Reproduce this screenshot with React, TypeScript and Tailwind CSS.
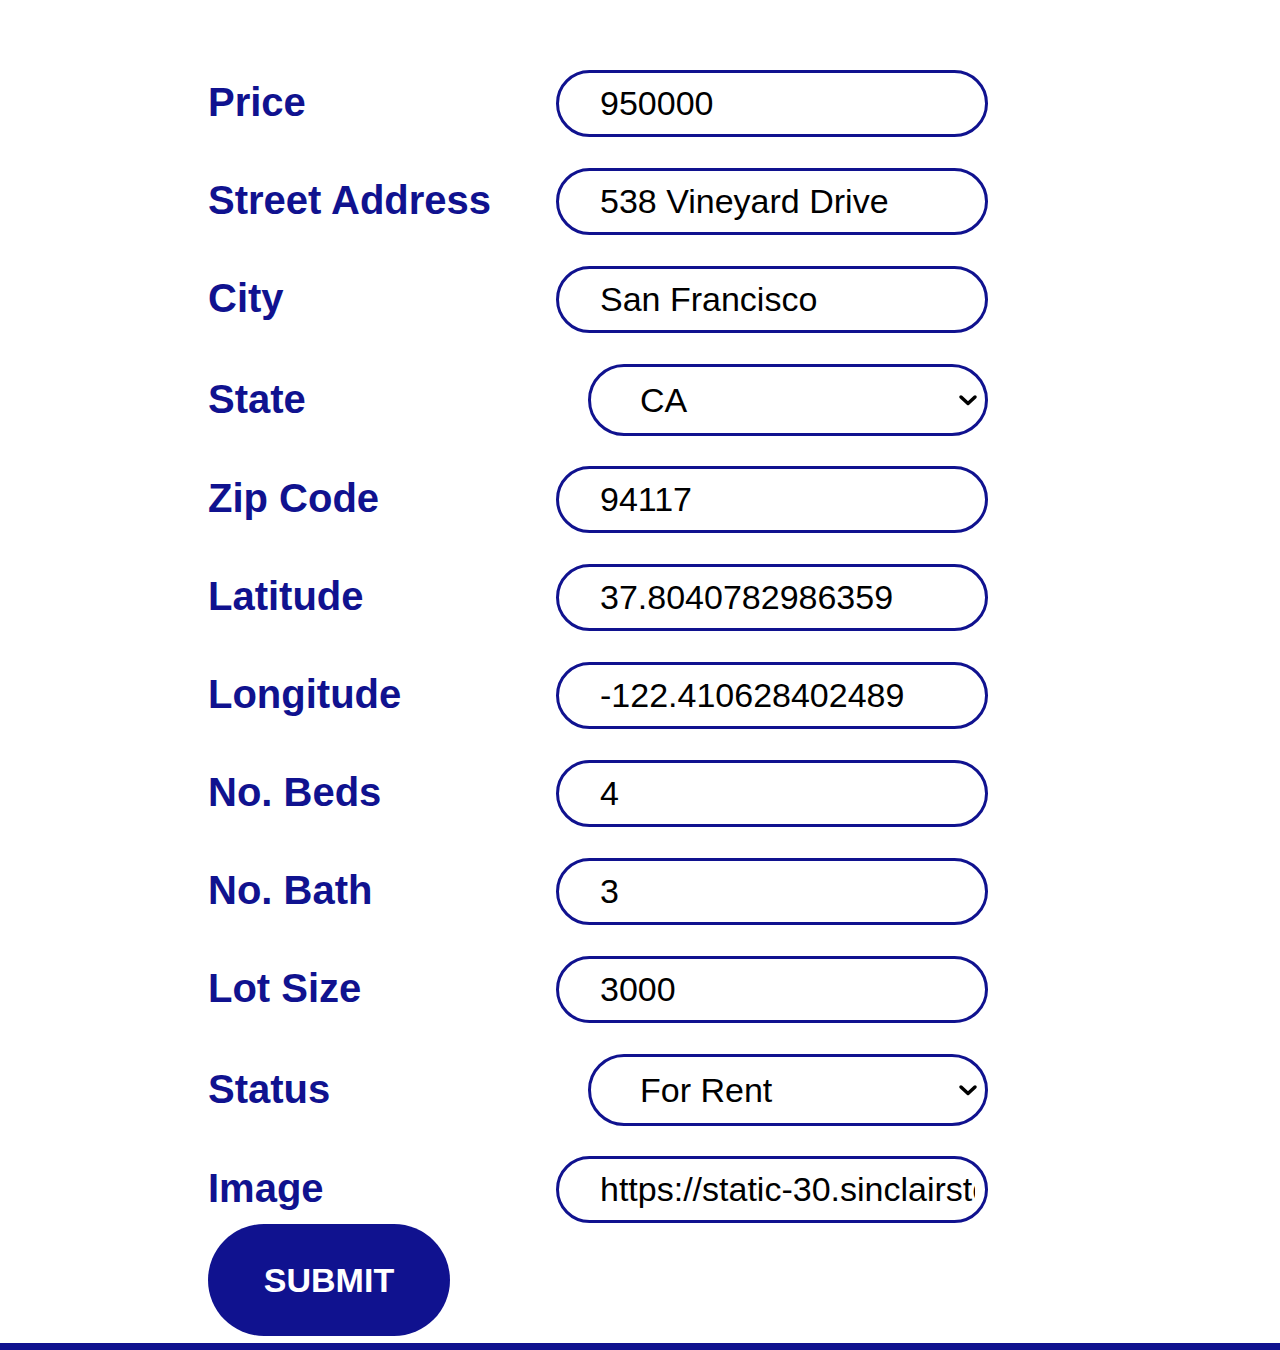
import { useState } from 'react'

const FIELDS = [
  { name: 'price', label: 'Price', value: '950000' },
  { name: 'address', label: 'Street Address', value: '538 Vineyard Drive' },
  { name: 'city', label: 'City', value: 'San Francisco' },
  { name: 'state', label: 'State', value: 'CA', options: ['AL', 'AZ', 'CA', 'CO', 'NY', 'OR', 'TX', 'WA'] },
  { name: 'zip', label: 'Zip Code', value: '94117' },
  { name: 'lat', label: 'Latitude', value: '37.8040782986359' },
  { name: 'lng', label: 'Longitude', value: '-122.410628402489' },
  { name: 'beds', label: 'No. Beds', value: '4' },
  { name: 'bath', label: 'No. Bath', value: '3' },
  { name: 'lot', label: 'Lot Size', value: '3000' },
  { name: 'status', label: 'Status', value: 'For Rent', options: ['For Sale', 'For Rent', 'Sold'] },
  {
    name: 'image',
    label: 'Image',
    value: 'https://static-30.sinclairstoryline.com/resources/media/house-538-vineyard-drive.jpg',
  },
]

function Chevron() {
  return (
    <svg
      className="pointer-events-none absolute right-[10px] top-1/2 -translate-y-1/2"
      width="20"
      height="13"
      viewBox="0 0 20 13"
      fill="none"
    >
      <path d="M3 3.5l7 6.5 7-6.5" stroke="#000" strokeWidth="3.5" strokeLinecap="round" strokeLinejoin="round" />
    </svg>
  )
}

export default function App() {
  const [values, setValues] = useState<Record<string, string>>(
    Object.fromEntries(FIELDS.map((f) => [f.name, f.value]))
  )

  return (
    <div className="min-h-[1350px] bg-white font-['Liberation_Sans',Arial,sans-serif] flex flex-col">
      <form className="flex flex-col pt-[70px] pl-[208px]" onSubmit={(e) => e.preventDefault()}>
        {FIELDS.map((f, i) => {
          const last = i === FIELDS.length - 1
          return (
            <div
              key={f.name}
              className={
                f.options
                  ? 'flex items-center h-[72px] mb-[30px]'
                  : last
                    ? 'flex items-center h-[67px] mb-px'
                    : 'flex items-center h-[67px] mb-[31px]'
              }
            >
              <label
                htmlFor={f.name}
                className="w-[348px] shrink-0 text-[40px] leading-[46px] font-bold text-[#10128f] -mt-[3px]"
              >
                {f.label}
              </label>
              {f.options ? (
                <div className="relative ml-[32px] w-[400px] h-[72px]">
                  <select
                    id={f.name}
                    value={values[f.name]}
                    onChange={(e) => setValues({ ...values, [f.name]: e.target.value })}
                    className="appearance-none w-full h-full rounded-full border-[3px] border-[#10128f] bg-white pl-[49px] pr-[40px] text-[34px] text-black outline-none"
                  >
                    {f.options.map((o) => (
                      <option key={o}>{o}</option>
                    ))}
                  </select>
                  <Chevron />
                </div>
              ) : (
                <input
                  id={f.name}
                  value={values[f.name]}
                  onChange={(e) => setValues({ ...values, [f.name]: e.target.value })}
                  className="w-[432px] h-[67px] rounded-full border-[3px] border-[#10128f] bg-white pl-[41px] pr-[10px] text-[34px] text-black outline-none"
                />
              )}
            </div>
          )
        })}
        <button
          type="submit"
          className="w-[242px] h-[112px] rounded-full bg-[#10128f] text-white text-[34px] font-bold leading-none"
        >
          SUBMIT
        </button>
      </form>
      <div className="mt-[7px] h-[8px] w-full bg-[#10128f]" />
    </div>
  )
}
